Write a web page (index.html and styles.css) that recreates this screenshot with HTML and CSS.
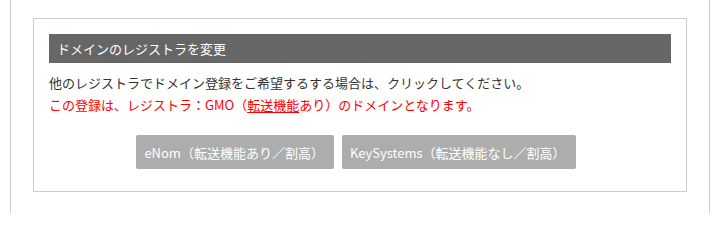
FILE: index.html
```html
<!DOCTYPE html>
<html lang="ja">
<head>
<meta charset="utf-8">
<link rel="stylesheet" href="styles.css">
</head>
<body>
<div class="page">
  <section class="panel">
    <h2 class="panel-title">ドメインのレジストラを変更</h2>
    <p class="lead">他のレジストラでドメイン登録をご希望するする場合は、クリックしてください。</p>
    <p class="note">この登録は、レジストラ：GMO（<u>転送機能</u>あり）のドメインとなります。</p>
    <div class="actions">
      <button class="btn" type="button">eNom（転送機能あり／割高）</button>
      <button class="btn" type="button">KeySystems（転送機能なし／割高）</button>
    </div>
  </section>
</div>
</body>
</html>
```

FILE: styles.css
```css
html, body {
  margin: 0;
  padding: 0;
  background: #fff;
}
body {
  font-family: "Noto Sans CJK JP", "Noto Sans", sans-serif;
  font-size: 13px;
  color: #333;
}
.page {
  margin-left: 10px;
  width: 700px;
  height: 213px;
  box-sizing: border-box;
  border-left: 1px solid #cccccc;
  border-right: 1px solid #cccccc;
  padding-top: 18px;
}
.panel {
  margin-left: 22px;
  width: 654px;
  box-sizing: border-box;
  border: 1px solid #cccccc;
  padding: 15px;
}
.panel-title {
  margin: 0;
  background: #666666;
  color: #fff;
  font-size: 13px;
  font-weight: normal;
  height: 29px;
  line-height: 29px;
  padding-left: 8px;
}
.lead, .note {
  margin: 0;
  line-height: 22px;
}
.lead {
  margin-top: 9px;
}
.note {
  color: #ff0000;
}
.note u {
  text-decoration: underline;
  text-underline-offset: 2px;
}
.actions {
  display: flex;
  justify-content: center;
  gap: 8px;
  margin-top: 19px;
  margin-bottom: 7px;
  padding-right: 8px;
}
.btn {
  font-family: inherit;
  font-size: 13px;
  background: #adadad;
  color: #fff;
  border: none;
  border-radius: 2px;
  height: 34px;
  padding: 0 10px 0 8px;
  cursor: pointer;
}
```
